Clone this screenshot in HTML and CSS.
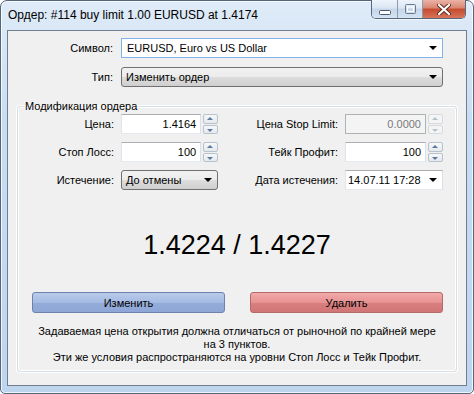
FILE: index.html
```html
<!DOCTYPE html>
<html lang="ru">
<head>
    <meta charset="UTF-8">
    <title>Ордер</title>
    <link rel="stylesheet" href="styles.css">
</head>
<body>
    <div class="window">
        <div class="titlebar">
            <span class="title">Ордер: #114 buy limit 1.00 EURUSD at 1.4174</span>
            <div class="caption-btns">
                <span class="cb cb-min">
                    <svg width="12" height="6" viewBox="0 0 12 6"><rect x="0.5" y="1.5" width="11" height="4" rx="1" fill="#fff" stroke="#4b5a6c"/></svg>
                </span>
                <span class="cb cb-max">
                    <svg width="11" height="10" viewBox="0 0 11 10"><rect x="0.5" y="0.5" width="10" height="9" rx="1" fill="none" stroke="#6a7a8c"/><rect x="2.5" y="3" width="6" height="4.5" fill="none" stroke="#fff"/></svg>
                </span>
                <span class="cb cb-close">
                    <svg width="14" height="11" viewBox="0 0 14 11"><path d="M2 1 L12 10 M12 1 L2 10" stroke="#5a2a20" stroke-width="4" stroke-linecap="round"/><path d="M2 1 L12 10 M12 1 L2 10" stroke="#fff" stroke-width="2.2" stroke-linecap="round"/></svg>
                </span>
            </div>
        </div>

        <div class="client">
            <div class="top-grid">
                <span class="lbl">Символ:</span>
                <div class="combo combo-edit focused">EURUSD, Euro vs US Dollar<i class="arrow"></i></div>
                <span class="lbl">Тип:</span>
                <div class="combo combo-btn">Изменить ордер<i class="arrow"></i></div>
            </div>

            <fieldset class="group">
                <legend>Модификация ордера</legend>

                <div class="fields">
                    <span class="lbl">Цена:</span>
                    <div class="spin">
                        <div class="edit num">1.4164</div>
                        <div class="spin-btns"><span class="sb up"></span><span class="sb down"></span></div>
                    </div>
                    <span class="lbl">Цена Stop Limit:</span>
                    <div class="spin disabled">
                        <div class="edit num">0.0000</div>
                        <div class="spin-btns"><span class="sb up"></span><span class="sb down"></span></div>
                    </div>

                    <span class="lbl">Стоп Лосс:</span>
                    <div class="spin">
                        <div class="edit num">100</div>
                        <div class="spin-btns"><span class="sb up"></span><span class="sb down"></span></div>
                    </div>
                    <span class="lbl">Тейк Профит:</span>
                    <div class="spin">
                        <div class="edit num">100</div>
                        <div class="spin-btns"><span class="sb up"></span><span class="sb down"></span></div>
                    </div>

                    <span class="lbl">Истечение:</span>
                    <div class="combo combo-btn">До отмены<i class="arrow"></i></div>
                    <span class="lbl">Дата истечения:</span>
                    <div class="combo combo-edit date">14.07.11 17:28<i class="arrow"></i></div>
                </div>

                <div class="quote">1.4224 / 1.4227</div>

                <div class="actions">
                    <button class="btn btn-modify">Изменить</button>
                    <button class="btn btn-delete">Удалить</button>
                </div>

                <p class="note">
                    Задаваемая цена открытия должна отличаться от рыночной по крайней мере<br>
                    на 3 пунктов.<br>
                    Эти же условия распространяются на уровни Стоп Лосс и Тейк Профит.
                </p>
            </fieldset>
        </div>
    </div>
</body>
</html>
```

FILE: styles.css
```css
* {
    box-sizing: border-box;
}
body {
    margin: 0;
    font-family: "Liberation Sans", Arial, sans-serif;
    font-size: 11px;
    color: #000;
    background: #fff;
}
.window {
    width: 474px;
    height: 394px;
    display: flex;
    flex-direction: column;
    padding: 0 6px 7px;
    border: 1px solid #53667c;
    border-radius: 7px 7px 5px 5px;
    background: linear-gradient(to bottom, #dfebf8 0%, #c9ddf2 30%, #bed5ee 100%);
    box-shadow: inset 0 0 0 1px rgba(255, 255, 255, 0.75);
}
.titlebar {
    height: 29px;
    display: flex;
    justify-content: space-between;
    align-items: flex-start;
}
.title {
    font-size: 12px;
    padding: 7px 0 0 1px;
}
.caption-btns {
    display: flex;
    margin-top: -1px;
    margin-right: 1px;
    height: 19px;
    border: 1px solid #56687e;
    border-top: none;
    border-radius: 0 0 5px 5px;
    overflow: hidden;
    box-shadow: 0 1px 0 rgba(255, 255, 255, 0.6);
}
.cb {
    display: flex;
    align-items: center;
    justify-content: center;
    height: 100%;
}
.cb-min,
.cb-max {
    width: 25px;
    background: linear-gradient(to bottom, #eef4fb 0%, #dae6f3 45%, #c5d6ea 50%, #d6e4f3 100%);
    border-right: 1px solid #8a9bb0;
}
.cb-min {
    width: 26px;
}
.cb-min svg {
    margin-top: 5px;
}
.cb-close {
    width: 42px;
    background: linear-gradient(to bottom, #eab3a6 0%, #d98570 45%, #c54b2e 50%, #d7745a 100%);
}
.client {
    flex: 1;
    display: flex;
    flex-direction: column;
    background: #f0f0f0;
    border: 1px solid #6e7f92;
    padding-top: 7px;
}
.top-grid {
    display: grid;
    grid-template-columns: 105px 322px;
    column-gap: 8px;
    row-gap: 9px;
    align-items: center;
}
.lbl {
    text-align: right;
    white-space: nowrap;
}
.combo {
    position: relative;
    height: 20px;
    line-height: 18px;
    padding-left: 5px;
    white-space: nowrap;
}
.combo-edit {
    background: #fff;
    border: 1px solid;
    border-color: #abadb3 #dbdfe6 #e3e9ef #e2e3ea;
}
.combo-edit.focused {
    border-color: #7eb4ea;
}
.combo-btn {
    border: 1px solid #707070;
    border-radius: 3px;
    background: linear-gradient(to bottom, #f2f2f2 0%, #ebebeb 50%, #dddddd 51%, #cfcfcf 100%);
    padding-left: 4px;
}
.arrow {
    position: absolute;
    right: 5px;
    top: 7px;
    width: 0;
    height: 0;
    border-left: 4px solid transparent;
    border-right: 4px solid transparent;
    border-top: 4px solid #000;
}
.group {
    flex: 1;
    margin: 13px 9px 13px 9px;
    padding: 0;
    border: 1px solid #d5dfe5;
    border-radius: 3px;
    box-shadow: inset 0 0 0 1px #fff, 0 0 0 1px #fff;
    min-width: 0;
}
.group legend {
    margin-left: 5px;
    padding: 0 2px;
    line-height: 13px;
}
.fields {
    display: grid;
    grid-template-columns: 96px 97px 113px 98px;
    column-gap: 7px;
    row-gap: 8px;
    align-items: center;
    margin-top: 1px;
}
.spin {
    display: flex;
    gap: 2px;
    height: 20px;
}
.edit {
    width: 81px;
    height: 20px;
    line-height: 18px;
    background: #fff;
    border: 1px solid;
    border-color: #abadb3 #dbdfe6 #e3e9ef #e2e3ea;
    padding: 0 4px;
}
.num {
    text-align: right;
}
.spin-btns {
    width: 15px;
    display: flex;
    flex-direction: column;
    gap: 1px;
}
.sb {
    flex: 1;
    position: relative;
    border: 1px solid #b8c2cc;
    border-radius: 2px;
    background: linear-gradient(to bottom, #f6f8fa, #e4e9ee);
}
.sb::after {
    content: "";
    position: absolute;
    left: 3px;
    width: 0;
    height: 0;
    border-left: 3.5px solid transparent;
    border-right: 3.5px solid transparent;
}
.sb.up::after {
    top: 2px;
    border-bottom: 3px solid #5c7a9a;
}
.sb.down::after {
    top: 3px;
    border-top: 3px solid #5c7a9a;
}
.disabled .edit {
    background: #f4f4f4;
    border-color: #adb2b5;
    color: #7a7a7a;
}
.disabled .sb {
    border-color: #d6dadf;
    background: #f4f4f4;
}
.disabled .sb::after {
    border-bottom-color: #b5bfc9;
    border-top-color: #b5bfc9;
}
.date {
    padding-left: 2px;
}
.quote {
    text-align: center;
    font-size: 27px;
    margin-top: 39px;
    line-height: 32px;
}
.actions {
    display: grid;
    grid-template-columns: 193px 193px;
    column-gap: 25px;
    margin: 31px 0 0 14px;
}
.btn {
    height: 21px;
    font-family: inherit;
    font-size: 11px;
    color: #000;
    border-radius: 3px;
    padding: 0;
}
.btn-modify {
    border: 1px solid #6e82ad;
    background: linear-gradient(to bottom, #b9cbea 0%, #a5bbe3 50%, #95acd9 51%, #8ea7d6 100%);
}
.btn-delete {
    border: 1px solid #b56a6a;
    background: linear-gradient(to bottom, #f2a9a9 0%, #e69292 50%, #d97f7f 51%, #d07676 100%);
}
.note {
    margin: 12px 0 0;
    text-align: center;
    line-height: 13px;
}
```
